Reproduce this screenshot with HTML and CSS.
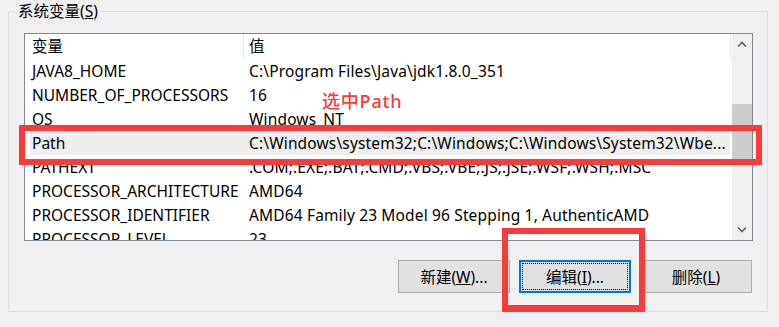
FILE: index.html
```html
<!DOCTYPE html>
<html lang="zh-CN">
<head>
  <meta charset="UTF-8">
  <title>系统变量</title>
  <link rel="stylesheet" href="styles.css">
</head>
<body>

  <div class="group">
    <span class="legend">系统变量(<u>S</u>)</span>

    <div class="listbox">
      <div class="list">
        <div class="row head">
          <div class="name">变量</div>
          <div class="value">值</div>
        </div>
        <div class="rows">
          <div class="row"><div class="name">JAVA8_HOME</div><div class="value">C:\Program Files\Java\jdk1.8.0_351</div></div>
          <div class="row"><div class="name">NUMBER_OF_PROCESSORS</div><div class="value">16</div></div>
          <div class="row"><div class="name">OS</div><div class="value">Windows_NT</div></div>
          <div class="row selected"><div class="name">Path</div><div class="value">C:\Windows\system32;C:\Windows;C:\Windows\System32\Wbe...</div></div>
          <div class="row"><div class="name">PATHEXT</div><div class="value">.COM;.EXE;.BAT;.CMD;.VBS;.VBE;.JS;.JSE;.WSF;.WSH;.MSC</div></div>
          <div class="row"><div class="name">PROCESSOR_ARCHITECTURE</div><div class="value">AMD64</div></div>
          <div class="row"><div class="name">PROCESSOR_IDENTIFIER</div><div class="value">AMD64 Family 23 Model 96 Stepping 1, AuthenticAMD</div></div>
          <div class="row"><div class="name">PROCESSOR_LEVEL</div><div class="value">23</div></div>
        </div>
      </div>

      <div class="scrollbar">
        <div class="arrow">
          <svg width="10" height="6" viewBox="0 0 10 6"><path d="M1 5.5 L5 1.5 L9 5.5" fill="none" stroke="#606060" stroke-width="1.6"/></svg>
        </div>
        <div class="track">
          <div class="thumb"></div>
        </div>
        <div class="arrow">
          <svg width="10" height="6" viewBox="0 0 10 6"><path d="M1 0.5 L5 4.5 L9 0.5" fill="none" stroke="#606060" stroke-width="1.6"/></svg>
        </div>
      </div>
    </div>

    <div class="buttons">
      <button>新建(<u>W</u>)...</button>
      <button class="focused"><span>编辑(<u>I</u>)...</span></button>
      <button>删除(<u>L</u>)</button>
    </div>

    <div class="mark mark-path"></div>
    <div class="mark mark-edit"></div>
    <span class="note">选中Path</span>
  </div>

</body>
</html>
```

FILE: styles.css
```css
body {
  margin: 0;
  background-color: #f0f0f0;
  font-family: "Noto Sans", "Noto Sans CJK SC", sans-serif;
  font-size: 15.5px;
  color: #000;
}

.group {
  position: relative;
  margin: 11px 0 0 8px;
  width: 758px;
  height: 299px;
  border: 1px solid #dcdcdc;
}

.legend {
  position: absolute;
  left: 6px;
  top: -11px;
  padding: 0 3px;
  background-color: #f0f0f0;
  line-height: 20px;
}

.listbox {
  display: flex;
  margin: 21px 0 0 15px;
  width: 727px;
  height: 206px;
  border: 1px solid #828790;
  background-color: #fff;
  overflow: hidden;
}

.list {
  flex: 1;
  overflow: hidden;
}

.row {
  display: flex;
  height: 24px;
  line-height: 24px;
  white-space: nowrap;
}

.row.head {
  height: 25px;
  line-height: 25px;
}

.name {
  width: 211px;
  padding-left: 7px;
  flex-shrink: 0;
}

.value {
  padding-left: 6px;
  overflow: hidden;
}

.head .value {
  flex: 1;
  border-left: 1px solid #e5e5e5;
  border-right: 1px solid #e5e5e5;
  padding-left: 5px;
}

.rows .row {
  margin-left: 5px;
  margin-right: 1px;
}

.rows .name {
  width: 211px;
  padding-left: 2px;
}

.rows .value {
  letter-spacing: 0.15px;
}

.selected {
  background-color: #efefef;
}

.scrollbar {
  display: flex;
  flex-direction: column;
  width: 20px;
  background-color: #f0f0f0;
  margin: 0 0 0 1px;
}

.arrow {
  height: 20px;
  display: flex;
  align-items: center;
  justify-content: center;
}

.track {
  flex: 1;
  padding-top: 50px;
}

.thumb {
  height: 59px;
  background-color: #cdcdcd;
}

.buttons {
  display: flex;
  justify-content: flex-end;
  gap: 9px;
  margin: 19px 0 0 0;
  width: 743px;
}

button {
  width: 112px;
  height: 33px;
  font-family: inherit;
  font-size: 15.5px;
  color: #000;
  background-color: #e1e1e1;
  border: 1px solid #adadad;
  padding: 0;
}

button.focused {
  border: 2px solid #0078d7;
  padding: 1px;
}

button.focused span {
  display: flex;
  align-items: center;
  justify-content: center;
  height: 100%;
  border: 1px dotted #000;
  box-sizing: border-box;
}

.mark {
  position: absolute;
  border: 6px solid #f73b3b;
}

.mark-path {
  left: 10px;
  top: 113px;
  width: 731px;
  height: 28px;
}

.mark-edit {
  left: 493px;
  top: 216px;
  width: 131px;
  height: 71px;
  border-bottom-width: 7px;
}

.note {
  position: absolute;
  left: 313px;
  top: 77px;
  color: #f73b3b;
  font-size: 18px;
  font-weight: 500;
  letter-spacing: 0.8px;
  line-height: 24px;
}
```
